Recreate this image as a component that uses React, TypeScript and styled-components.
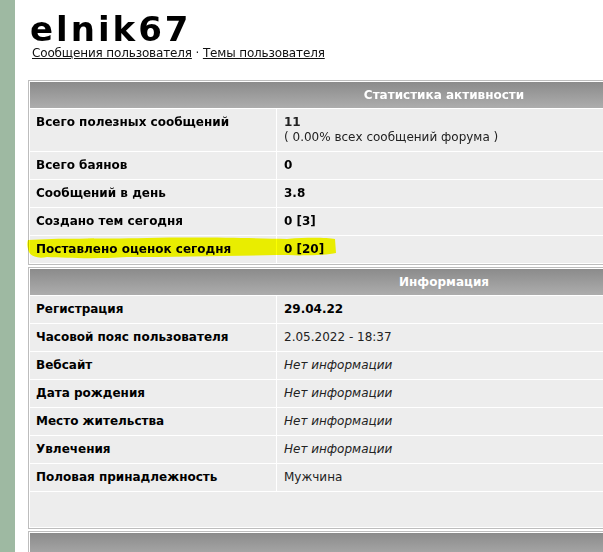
import React from "react";
import styled, { createGlobalStyle } from "styled-components";

const Global = createGlobalStyle`
  html, body {
    margin: 0;
    padding: 0;
    background: #ffffff;
    overflow: hidden;
  }
  body {
    font-family: Tahoma, "DejaVu Sans", Verdana, sans-serif;
    color: #000;
  }
`;

const Page = styled.div`
  display: flex;
  min-height: 552px;
  width: 900px;
`;

const Sidebar = styled.div`
  width: 15px;
  flex: none;
  background: #9eb9a2;
`;

const Main = styled.div`
  padding: 13px 0 0 13px;
  width: 832px;
`;

const Title = styled.h1`
  margin: 0;
  font-size: 34px;
  font-weight: bold;
  line-height: 32px;
  letter-spacing: 3px;
  padding-left: 2px;
`;

const Links = styled.div`
  font-size: 12px;
  line-height: 15px;
  padding-left: 4px;
  margin-top: 1px;
  color: #222;
  letter-spacing: -0.15px;
  a {
    color: #111;
    text-decoration: underline;
  }
`;

const Panel = styled.div<{ $top?: number }>`
  position: relative;
  margin-top: ${(p) => p.$top ?? 2}px;
  border: 1px solid #bdbdbd;
  padding: 1px;
  background: #ffffff;
  display: flex;
  flex-direction: column;
  gap: 1px;
`;

const Head = styled.div`
  height: 26px;
  background: linear-gradient(#8b8b8b, #adadad);
  color: #ffffff;
  font-weight: bold;
  font-size: 12px;
  display: flex;
  align-items: center;
  justify-content: center;
`;

const Row = styled.div<{ $h?: number }>`
  display: grid;
  grid-template-columns: 246px 1fr;
  gap: 1px;
  min-height: ${(p) => p.$h ?? 27}px;
`;

const Label = styled.div`
  background: #ededed;
  font-weight: bold;
  font-size: 12px;
  padding: 6px 8px 0 6px;
  line-height: 15px;
`;

const Value = styled.div<{ $bold?: boolean; $italic?: boolean }>`
  background: #ededed;
  font-size: 12px;
  padding: 6px 8px 0 7px;
  line-height: 15px;
  font-weight: ${(p) => (p.$bold ? "bold" : "normal")};
  font-style: ${(p) => (p.$italic ? "italic" : "normal")};
  color: ${(p) => (p.$bold ? "#000" : "#222")};
`;

const Empty = styled.div`
  background: #ededed;
  height: 35px;
`;

const Marker = styled.svg`
  position: absolute;
  left: -2px;
  top: 154px;
  width: 310px;
  height: 25px;
  pointer-events: none;
  mix-blend-mode: multiply;
`;

type Item = { label: string; value: React.ReactNode; bold?: boolean; italic?: boolean; h?: number };

const stats: Item[] = [
  {
    label: "Всего полезных сообщений",
    value: (
      <>
        <b>11</b>
        <br />( 0.00% всех сообщений форума )
      </>
    ),
    h: 42,
  },
  { label: "Всего баянов", value: "0", bold: true },
  { label: "Сообщений в день", value: "3.8", bold: true },
  { label: "Создано тем сегодня", value: "0 [3]", bold: true },
  { label: "Поставлено оценок сегодня", value: "0 [20]", bold: true },
];

const info: Item[] = [
  { label: "Регистрация", value: "29.04.22", bold: true },
  { label: "Часовой пояс пользователя", value: "2.05.2022 - 18:37" },
  { label: "Вебсайт", value: "Нет информации", italic: true },
  { label: "Дата рождения", value: "Нет информации", italic: true },
  { label: "Место жительства", value: "Нет информации", italic: true },
  { label: "Увлечения", value: "Нет информации", italic: true },
  { label: "Половая принадлежность", value: "Мужчина" },
];

const Rows = ({ items }: { items: Item[] }) => (
  <>
    {items.map((it) => (
      <Row key={it.label} $h={it.h}>
        <Label>{it.label}</Label>
        <Value $bold={it.bold} $italic={it.italic}>
          {it.value}
        </Value>
      </Row>
    ))}
  </>
);

export default function App() {
  return (
    <>
      <Global />
      <Page>
        <Sidebar />
        <Main>
          <Title>elnik67</Title>
          <Links>
            <a href="#">Сообщения пользователя</a> · <a href="#">Темы пользователя</a>
          </Links>

          <Panel $top={19}>
            <Head>Статистика активности</Head>
            <Rows items={stats} />
            {/* highlighter stroke across the last stats row */}
            <Marker viewBox="0 0 310 25">
              <path
                d="M1 5 C30 3 70 4 120 3 C170 2 230 3 260 4 C285 2 300 3 308 4 L309 18 C300 20 280 21 250 20 C200 21 150 22 100 22 C70 24 40 23 20 22 C10 24 4 21 2 17 C0 12 0 8 1 5 Z"
                fill="#fbff00"
              />
            </Marker>
          </Panel>

          <Panel>
            <Head>Информация</Head>
            <Rows items={info} />
            <Empty />
          </Panel>

          <Panel>
            <Head />
          </Panel>
        </Main>
      </Page>
    </>
  );
}
